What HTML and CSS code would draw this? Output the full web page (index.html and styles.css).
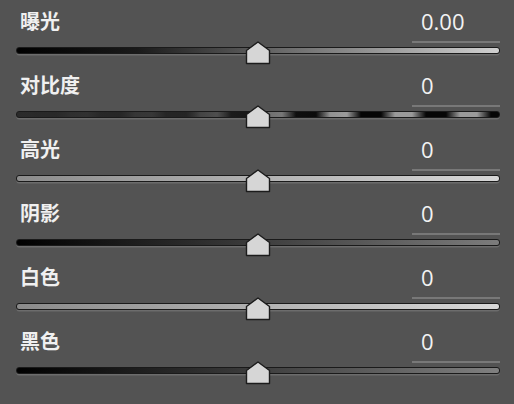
FILE: index.html
```html
<!DOCTYPE html>
<html lang="zh">
<head>
<meta charset="utf-8">
<title>Basic</title>
<link rel="stylesheet" href="styles.css">
</head>
<body>
<div class="panel">
  <div class="row">
    <div class="head"><span class="label">曝光</span><span class="value">0.00</span></div>
    <div class="slider"><div class="track t-exposure"></div><svg class="thumb" width="26" height="24" viewBox="0 0 26 24"><path d="M13 1 L24.5 9.5 L24.5 22.5 L1.5 22.5 L1.5 9.5 Z" fill="#d6d6d6" stroke="#1c1c1c" stroke-width="1.4" stroke-linejoin="round"/></svg></div>
  </div>
  <div class="row">
    <div class="head"><span class="label">对比度</span><span class="value">0</span></div>
    <div class="slider"><div class="track t-contrast"></div><svg class="thumb" width="26" height="24" viewBox="0 0 26 24"><path d="M13 1 L24.5 9.5 L24.5 22.5 L1.5 22.5 L1.5 9.5 Z" fill="#d6d6d6" stroke="#1c1c1c" stroke-width="1.4" stroke-linejoin="round"/></svg></div>
  </div>
  <div class="row">
    <div class="head"><span class="label">高光</span><span class="value">0</span></div>
    <div class="slider"><div class="track t-highlights"></div><svg class="thumb" width="26" height="24" viewBox="0 0 26 24"><path d="M13 1 L24.5 9.5 L24.5 22.5 L1.5 22.5 L1.5 9.5 Z" fill="#d6d6d6" stroke="#1c1c1c" stroke-width="1.4" stroke-linejoin="round"/></svg></div>
  </div>
  <div class="row">
    <div class="head"><span class="label">阴影</span><span class="value">0</span></div>
    <div class="slider"><div class="track t-shadows"></div><svg class="thumb" width="26" height="24" viewBox="0 0 26 24"><path d="M13 1 L24.5 9.5 L24.5 22.5 L1.5 22.5 L1.5 9.5 Z" fill="#d6d6d6" stroke="#1c1c1c" stroke-width="1.4" stroke-linejoin="round"/></svg></div>
  </div>
  <div class="row">
    <div class="head"><span class="label">白色</span><span class="value">0</span></div>
    <div class="slider"><div class="track t-whites"></div><svg class="thumb" width="26" height="24" viewBox="0 0 26 24"><path d="M13 1 L24.5 9.5 L24.5 22.5 L1.5 22.5 L1.5 9.5 Z" fill="#d6d6d6" stroke="#1c1c1c" stroke-width="1.4" stroke-linejoin="round"/></svg></div>
  </div>
  <div class="row">
    <div class="head"><span class="label">黑色</span><span class="value">0</span></div>
    <div class="slider"><div class="track t-blacks"></div><svg class="thumb" width="26" height="24" viewBox="0 0 26 24"><path d="M13 1 L24.5 9.5 L24.5 22.5 L1.5 22.5 L1.5 9.5 Z" fill="#d6d6d6" stroke="#1c1c1c" stroke-width="1.4" stroke-linejoin="round"/></svg></div>
  </div>
</div>
</body>
</html>
```
FILE: styles.css
```css
html, body {
  margin: 0;
  padding: 0;
  background: #535353;
}
body {
  width: 514px;
  height: 404px;
  overflow: hidden;
  font-family: "Noto Sans CJK SC", "Open Sans", sans-serif;
}
.panel {
  display: flex;
  flex-direction: column;
  padding: 0 14px 0 16px;
}
.row {
  height: 64px;
  display: flex;
  flex-direction: column;
}
.head {
  height: 43px;
  display: flex;
  justify-content: space-between;
  align-items: flex-start;
}
.label {
  margin: 9px 0 0 4px;
  font-size: 20px;
  line-height: 24px;
  font-weight: 700;
  color: #f0f0f0;
}
.value {
  box-sizing: border-box;
  width: 88px;
  height: 43px;
  padding: 8px 0 0 9px;
  border-bottom: 2px solid #787878;
  font-family: "Open Sans", sans-serif;
  font-weight: 400;
  font-size: 22px;
  line-height: 26px;
  color: #f2f2f2;
}
.slider {
  position: relative;
  margin-top: 4px;
}
.track {
  height: 5px;
  border: 1px solid #1a1a1a;
  border-radius: 3px;
  box-shadow: 0 2px 0 -0.5px #6c6c6c;
}
.thumb {
  position: absolute;
  left: 50%;
  top: -6px;
  margin-left: -13px;
  display: block;
}
.t-exposure { background: linear-gradient(to right, #000 0%, #1a1a1a 25%, #6a6a6a 55%, #d0d0d0 100%); }
.t-contrast {
  background:
    linear-gradient(to right, rgba(42,42,42,1) 0%, rgba(42,42,42,0.85) 35%, rgba(42,42,42,0.3) 55%, rgba(42,42,42,0) 68%),
    repeating-linear-gradient(90deg, #9a9a9a -11px, #9a9a9a 5px, #060606 19px, #060606 39px, #9a9a9a 53px, #9a9a9a 54px);
}
.t-highlights { background: linear-gradient(to right, #8c8c8c, #d6d6d6); }
.t-shadows { background: linear-gradient(to right, #000 0%, #2a2a2a 35%, #7c7c7c 100%); }
.t-whites { background: linear-gradient(to right, #8a8a8a, #d8d8d8); }
.t-blacks { background: linear-gradient(to right, #000 0%, #2a2a2a 35%, #808080 100%); }
```
